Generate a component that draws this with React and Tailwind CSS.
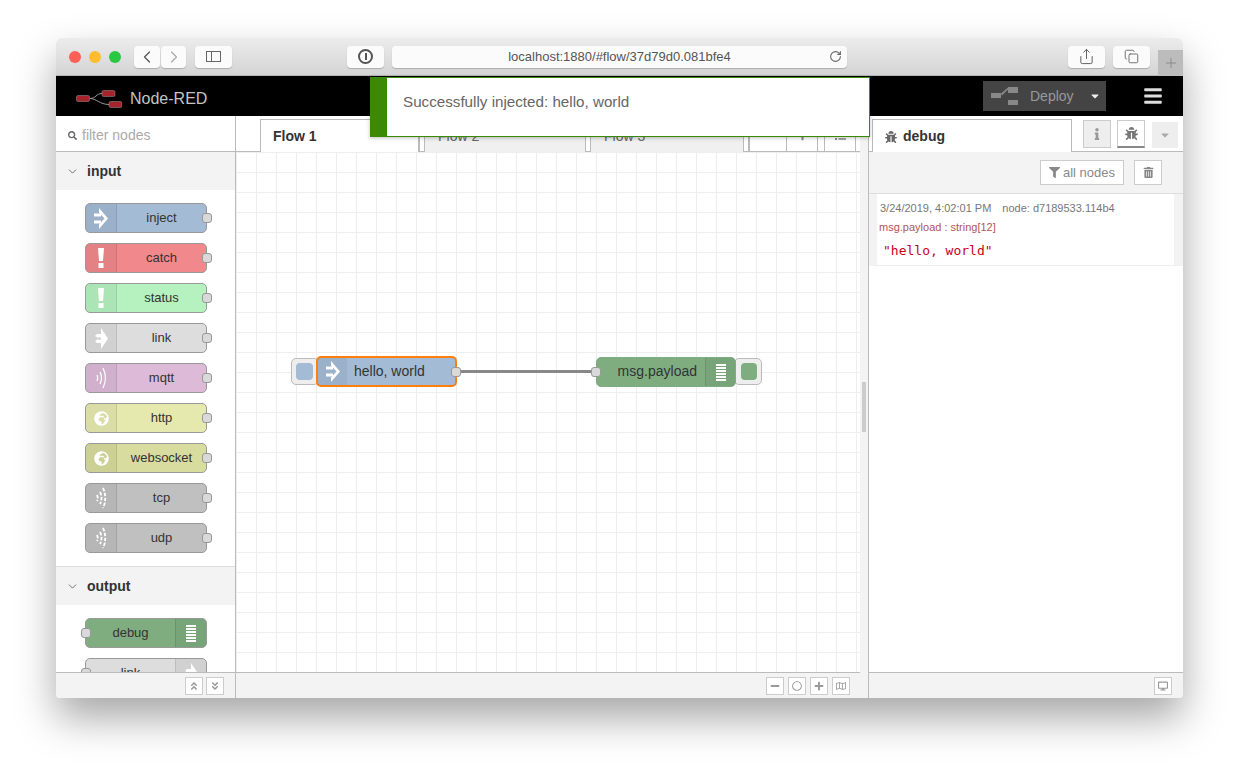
import React from "react";
import { ChevronLeft, ChevronRight, ChevronDown, RotateCw, Share, Copy, Plus } from "lucide-react";
import {
  FaBug,
  FaInfo,
  FaTrashAlt,
  FaFilter,
  FaMinus,
  FaPlus,
  FaRegCircle,
  FaDesktop,
  FaSearch,
  FaAngleDoubleUp,
  FaAngleDoubleDown,
  FaBars,
  FaCaretDown,
  FaRegMap,
  FaList,
  FaGlobeAfrica,
} from "react-icons/fa";

function ArrowIcon() {
  return (
    <svg width="14" height="21" viewBox="0 0 14 21" fill="white">
      <rect x="0" y="5.500" width="7" height="3" />
      <rect x="0" y="12.500" width="7" height="3" />
      <path d="M5 0l9 10.500L5 21v-4.500l5.500-6L5 4.500z" />
    </svg>
  );
}

function AlertIcon() {
  return (
    <svg width="8" height="22" viewBox="0 0 8 22" fill="white">
      <path d="M1 1h6l-1 13H2z" />
      <rect x="1.500" y="16" width="5" height="5" />
    </svg>
  );
}

function LinkIcon() {
  return (
    <svg width="13" height="21" viewBox="0 0 13 21" fill="white">
      <path d="M6 0l7 10.500L6 21v-6H2l-2-2 4-2.500L0 8l2-2h4z" />
      <circle cx="4.500" cy="10.500" r="1.500" fill="#d4d4d4" />
    </svg>
  );
}

function WaveIcon() {
  return (
    <svg width="12" height="24" viewBox="0 0 12 24" fill="none" stroke="white" strokeWidth="1.300">
      <path d="M2 9c1 2 1 4 0 6" />
      <path d="M5 6c2 4 2 8 0 12" />
      <path d="M8 2c3 6 3 14 0 20" />
    </svg>
  );
}

function SocketIcon() {
  return (
    <svg width="12" height="24" viewBox="0 0 12 24" fill="none" stroke="white" strokeWidth="1.800" strokeDasharray="3.500 1.500">
      <path d="M2 9c1 2 1 4 0 6" />
      <path d="M5 6c2 4 2 8 0 12" />
      <path d="M8 2c3 6 3 14 0 20" />
    </svg>
  );
}

function DebugLines() {
  return (
    <div className="flex flex-col gap-[1px]">
      <div className="h-[2px] w-[10px] bg-white" />
      <div className="h-[2px] w-[10px] bg-white" />
      <div className="h-[2px] w-[10px] bg-white" />
      <div className="h-[2px] w-[10px] bg-white" />
      <div className="h-[2px] w-[10px] bg-white" />
      <div className="h-[2px] w-[10px] bg-white" />
    </div>
  );
}

const inputNodes = [
  { label: "inject", bg: "bg-[#a3bbd4]", icon: <ArrowIcon /> },
  { label: "catch", bg: "bg-[#f0888c]", icon: <AlertIcon /> },
  { label: "status", bg: "bg-[#b6f2bf]", icon: <AlertIcon /> },
  { label: "link", bg: "bg-[#dddddd]", icon: <LinkIcon /> },
  { label: "mqtt", bg: "bg-[#dcbad8]", icon: <WaveIcon /> },
  { label: "http", bg: "bg-[#e6e9ae]", icon: <FaGlobeAfrica className="text-white text-[15px]" /> },
  { label: "websocket", bg: "bg-[#d8dc9e]", icon: <FaGlobeAfrica className="text-white text-[15px]" /> },
  { label: "tcp", bg: "bg-[#c0c0c0]", icon: <SocketIcon /> },
  { label: "udp", bg: "bg-[#c0c0c0]", icon: <SocketIcon /> },
];

function PaletteNode({ label, bg, icon, right }) {
  return (
    <div className={`relative flex h-[30px] w-[122px] rounded-[5px] border border-[#999] text-[13px] text-[#333] ${bg}`}>
      {!right && (
        <div className="flex w-[31px] items-center justify-center rounded-l-[4px] border-r border-black/10 bg-black/5">{icon}</div>
      )}
      <div className="flex flex-1 items-center justify-center overflow-hidden">{label}</div>
      {right && (
        <div className="flex w-[31px] items-center justify-center rounded-r-[4px] border-l border-black/10 bg-black/5">{icon}</div>
      )}
      <div className={`absolute top-[9px] h-[10px] w-[10px] rounded-[3px] border border-[#999] bg-[#d9d9d9] ${right ? "left-[-5px]" : "right-[-6px]"}`} />
    </div>
  );
}

function CategoryHeader({ label }) {
  return (
    <div className="flex h-[38px] items-center bg-[#f3f3f3] pl-[10px] text-[14px] font-bold text-[#333]">
      <ChevronDown size={13} strokeWidth={1.500} className="mr-[8px] text-[#555]" />
      {label}
    </div>
  );
}

function Palette() {
  return (
    <div className="flex w-[180px] flex-col border-r border-[#bbb]">
      <div className="flex h-[36px] items-center border-b border-[#bbb] pl-[12px] pt-[4px] text-[14px] text-[#aaa]">
        <FaSearch className="mr-[5px] text-[9px] text-[#666]" />
        filter nodes
      </div>
      <div className="h-0 flex-1 overflow-hidden">
        <CategoryHeader label="input" />
        <div className="flex flex-col items-start gap-[10px] pb-[13px] pl-[29px] pt-[13px]">
          {inputNodes.map((n) => (
            <PaletteNode key={n.label} {...n} />
          ))}
        </div>
        <div className="border-t border-[#ddd]">
          <CategoryHeader label="output" />
        </div>
        <div className="flex flex-col items-start gap-[10px] pl-[29px] pt-[13px]">
          <PaletteNode label="debug" bg="bg-[#7fad80]" right icon={<DebugLines />} />
          <PaletteNode label="link" bg="bg-[#dddddd]" right icon={<LinkIcon />} />
        </div>
      </div>
      <div className="flex h-[26px] items-center justify-end gap-[3px] border-t border-[#bbb] bg-[#f3f3f3] pr-[11px]">
        <SmallButton><FaAngleDoubleUp /></SmallButton>
        <SmallButton><FaAngleDoubleDown /></SmallButton>
      </div>
    </div>
  );
}

function SmallButton({ children }) {
  return (
    <div className="flex h-[18px] w-[18px] items-center justify-center border border-[#ccc] bg-white text-[10px] text-[#999]">
      {children}
    </div>
  );
}

function FlowTab({ label, active, width }) {
  return (
    <>
      <div
        className={`mb-[-1px] flex h-[33px] items-center border border-b-0 pl-[12px] pt-[1px] text-[14px] ${width} ${
          active ? "border-[#bbb] bg-white font-bold text-[#333]" : "border-[#f0f0f0] bg-[#f0f0f0] text-[#666]"
        }`}
      >
        {label}
      </div>
      <div className="h-[32px] w-[6px] border border-b-0 border-[#bbb] bg-white" />
    </>
  );
}

function Canvas() {
  return (
    <div className="relative flex-1 overflow-hidden bg-white bg-[linear-gradient(#eee_1px,transparent_1px),linear-gradient(90deg,#eee_1px,transparent_1px)] bg-[size:20px_20px]">
      <svg className="absolute left-[220px] top-[215px]" width="145" height="9">
        <line x1="0" y1="4.500" x2="145" y2="4.500" stroke="#888" strokeWidth="3" />
      </svg>

      {/* inject node with its button */}
      <div className="absolute left-[55px] top-[206px] flex h-[27px] w-[28px] items-center rounded-[5px] border border-[#bbb] bg-[#eee] pl-[4px]">
        <div className="h-[17px] w-[17px] rounded-[4px] bg-[#a3bbd4]" />
      </div>
      <div className="absolute left-[80px] top-[204px] flex h-[31px] w-[141px] rounded-[5px] border-2 border-[#ff7f0e] bg-[#a3bbd4] text-[14px] text-[#333]">
        <div className="flex w-[29px] items-center justify-center bg-black/5">
          <ArrowIcon />
        </div>
        <div className="flex flex-1 items-center pl-[7px]">hello, world</div>
        <div className="absolute right-[-6px] top-[9px] h-[10px] w-[10px] rounded-[3px] border border-[#999] bg-[#d9d9d9]" />
      </div>

      {/* debug node with its button */}
      <div className="absolute left-[498px] top-[206px] flex h-[27px] w-[28px] items-center rounded-[5px] border border-[#bbb] bg-[#eee] pl-[6px]">
        <div className="h-[17px] w-[16px] rounded-[4px] bg-[#7fad80]" />
      </div>
      <div className="absolute left-[360px] top-[205px] flex h-[30px] w-[140px] rounded-[5px] border border-[#7fad80] bg-[#7fad80] text-[14px] text-[#333]">
        <div className="flex flex-1 items-center justify-end pb-[2px] pr-[8px]">msg.payload</div>
        <div className="flex w-[30px] items-center justify-center rounded-r-[4px] border-l border-black/10 bg-black/5">
          <DebugLines />
        </div>
        <div className="absolute left-[-6px] top-[9px] h-[10px] w-[10px] rounded-[3px] border border-[#999] bg-[#d9d9d9]" />
      </div>
    </div>
  );
}

function Workspace() {
  return (
    <div className="flex w-[624px] flex-col">
      <div className="flex h-[36px] items-end border-b border-[#bbb] pl-[24px]">
        <FlowTab label="Flow 1" active width="w-[159px]" />
        <FlowTab label="Flow 2" width="w-[160px]" />
        <FlowTab label="Flow 3" width="w-[152px]" />
        <div className="h-[32px] w-[38px] border border-b-0 border-[#bbb] bg-white" />
        <div className="flex h-[32px] w-[31px] items-center justify-center border-r border-t border-[#bbb] bg-white text-[11px] text-[#888]">
          <FaPlus />
        </div>
        <div className="h-[32px] w-[7px] border-r border-t border-[#bbb] bg-white" />
        <div className="flex h-[32px] w-[31px] items-center justify-center border-r border-t border-[#bbb] bg-white text-[11px] text-[#888]">
          <FaList />
        </div>
      </div>
      <Canvas />
      <div className="flex h-[26px] items-center justify-end gap-[4px] border-t border-[#bbb] bg-[#f3f3f3] pr-[10px]">
        <SmallButton><FaMinus /></SmallButton>
        <SmallButton><FaRegCircle /></SmallButton>
        <SmallButton><FaPlus /></SmallButton>
        <SmallButton><FaRegMap /></SmallButton>
      </div>
    </div>
  );
}

function Sidebar() {
  return (
    <div className="flex flex-1 flex-col border-l border-[#bbb]">
      <div className="flex h-[36px] items-end border-b border-[#bbb] pl-[3px]">
        <div className="mb-[-1px] flex h-[33px] w-[200px] items-center gap-[6px] border border-b-0 border-[#bbb] bg-white pl-[12px] pt-[1px] text-[14px] font-bold text-[#333]">
          <FaBug className="text-[12px] text-[#666]" />
          debug
        </div>
        <div className="mb-[3px] ml-[11px] flex h-[28px] w-[28px] items-center justify-center border border-[#ccc] bg-[#eee] text-[12px] text-[#999]">
          <FaInfo />
        </div>
        <div className="mb-[3px] ml-[6px] flex h-[28px] w-[28px] items-center justify-center border border-b-2 border-[#ccc] border-b-[#888] bg-white text-[13px] text-[#777]">
          <FaBug />
        </div>
        <div className="mb-[3px] ml-[7px] flex h-[26px] w-[26px] items-center justify-center bg-[#eee] text-[12px] text-[#aaa]">
          <FaCaretDown />
        </div>
      </div>
      <div className="flex h-[42px] items-center justify-end gap-[10px] border-b border-[#ddd] bg-[#f3f3f3] pr-[21px]">
        <div className="flex h-[25px] w-[84px] items-center justify-center gap-[3px] border border-[#ccc] bg-white text-[13px] text-[#888]">
          <FaFilter className="text-[11px]" />
          all nodes
        </div>
        <div className="flex h-[25px] w-[28px] items-center justify-center border border-[#ccc] bg-white text-[11px] text-[#888]">
          <FaTrashAlt />
        </div>
      </div>
      <div className="flex-1 bg-white">
        <div className="h-[72px] border-b border-[#eee] border-l-[8px] border-r-[9px] border-l-[#f3f3f3] border-r-[#f3f3f3] pl-[3px] pt-[7px]">
          <div className="flex gap-[11px] text-[11px] leading-[14px] text-[#777]">
            <span>3/24/2019, 4:02:01 PM</span>
            <span>node: d7189533.114b4</span>
          </div>
          <div className="ml-[-1px] mt-[5px] text-[11px] leading-[14px] text-[#b25555]">msg.payload : string[12]</div>
          <div className="ml-[3px] mt-[9px] font-['DejaVu_Sans_Mono',monospace] text-[13px] leading-[16px] text-[#c7001e]">"hello, world"</div>
        </div>
      </div>
      <div className="flex h-[26px] items-center justify-end border-t border-[#bbb] bg-[#f3f3f3] pr-[11px]">
        <SmallButton><FaDesktop /></SmallButton>
      </div>
    </div>
  );
}

function Toolbar() {
  const btn = "flex h-[22px] items-center justify-center rounded-[4px] bg-[#fbfbfb] shadow-[0_1px_1px_rgba(0,0,0,0.2)] text-[#555]";
  return (
    <div className="flex h-[38px] items-center border-b border-[#b5b5b5] bg-[linear-gradient(#ececec,#d4d4d4)] pl-[13px] pr-[33px]">
      <div className="flex gap-[8px]">
        <div className="h-[12px] w-[12px] rounded-full bg-[#ff5f57]" />
        <div className="h-[12px] w-[12px] rounded-full bg-[#ffbd2e]" />
        <div className="h-[12px] w-[12px] rounded-full bg-[#28c940]" />
      </div>
      <div className={`${btn} ml-[13px] w-[26px]`}><ChevronLeft size={20} strokeWidth={1.500} /></div>
      <div className={`${btn} ml-[1px] w-[25px] text-[#aaa]`}><ChevronRight size={20} strokeWidth={1.500} /></div>
      <div className={`${btn} ml-[9px] w-[37px]`}>
        <div className="flex h-[11px] w-[15px] border border-[#666]">
          <div className="w-[5px] border-r border-[#666]" />
        </div>
      </div>
      <div className={`${btn} ml-[115px] w-[37px]`}>
        <div className="flex h-[15px] w-[15px] items-center justify-center rounded-full border-2 border-[#555]">
          <div className="h-[7px] w-[2px] bg-[#555]" />
        </div>
      </div>
      <div className={`${btn} relative ml-[8px] w-[455px] text-[13px] text-[#444]`}>
        localhost:1880/#flow/37d79d0.081bfe4
        <RotateCw size={13} className="absolute right-[5px] text-[#666]" />
      </div>
      <div className={`${btn} ml-[221px] w-[37px]`}><Share size={17} strokeWidth={1.300} /></div>
      <div className={`${btn} ml-[8px] w-[37px]`}><Copy size={15} strokeWidth={1.300} /></div>
      <div className="absolute right-0 top-[12px] flex h-[26px] w-[25px] items-center justify-center bg-[#bcbcbc] text-[#777]">
        <Plus size={16} strokeWidth={1} />
      </div>
    </div>
  );
}

function Header() {
  return (
    <div className="flex h-[40px] items-center bg-black pl-[20px] pr-[20px] text-[#c4c4c4]">
      <svg width="46" height="24" viewBox="0 0 46 24" className="mr-[8px]">
        <path d="M14 14.500c6 0 6-5 12-5M14 14.500c6 0 10 6 19 6" fill="none" stroke="#999" strokeWidth="1" />
        <rect x="0.500" y="11.500" width="13" height="6" rx="1.500" fill="#a6242b" stroke="#999" strokeWidth="0.500" />
        <rect x="26" y="6.500" width="13" height="6" rx="1.500" fill="#a6242b" stroke="#999" strokeWidth="0.500" />
        <rect x="33" y="17.500" width="13" height="6" rx="1.500" fill="#a6242b" stroke="#999" strokeWidth="0.500" />
      </svg>
      <span className="mt-[6px] text-[16px]">Node-RED</span>
      <div className="ml-auto flex h-[30px] w-[123px] items-center bg-[#444] pl-[8px] text-[14px] text-[#999]">
        <svg width="28" height="18" viewBox="0 0 28 18" fill="#888">
          <rect x="0" y="6" width="10" height="5" />
          <path d="M10 6.500l7-6v2l-6 6z" />
          <rect x="17" y="0" width="10" height="6" />
          <rect x="17" y="13" width="10" height="5" />
        </svg>
        <span className="ml-[11px]">Deploy</span>
        <FaCaretDown className="ml-[15px] text-[#eee]" size={12} />
      </div>
      <FaBars className="ml-[37px] text-[#ddd]" size={20} />
    </div>
  );
}

export default function App() {
  return (
    <div className="h-[773px] w-[1239px] overflow-hidden bg-white pl-[56px] pt-[38px] font-['Liberation_Sans',Arial,sans-serif]">
      <div className="relative flex h-[660px] w-[1127px] flex-col rounded-t-[6px] rounded-b-[4px] bg-white shadow-[0_20px_40px_rgba(0,0,0,0.35)]">
        <div className="relative overflow-hidden rounded-t-[6px]">
          <Toolbar />
        </div>
        <Header />
        <div className="flex h-0 flex-1 overflow-hidden rounded-b-[4px]">
          <Palette />
          <Workspace />
          <div className="flex w-[8px] items-center justify-center bg-[#f3f3f3]">
            <div className="h-[50px] w-[4px] bg-[#ccc]" />
          </div>
          <Sidebar />
        </div>

        {/* notification over the tab bar */}
        <div className="absolute left-[314px] top-[39px] flex h-[60px] w-[500px] items-start border border-[#3a8a08] bg-white pl-[16px] shadow-[0_1px_4px_rgba(0,0,0,0.25)]">
          <div className="absolute bottom-0 left-0 top-0 w-[16px] bg-[#3a8a08]" />
          <div className="pl-[16px] pt-[15px] text-[15.2px] leading-[18px] text-[#666]">Successfully injected: hello, world</div>
        </div>
      </div>
    </div>
  );
}
